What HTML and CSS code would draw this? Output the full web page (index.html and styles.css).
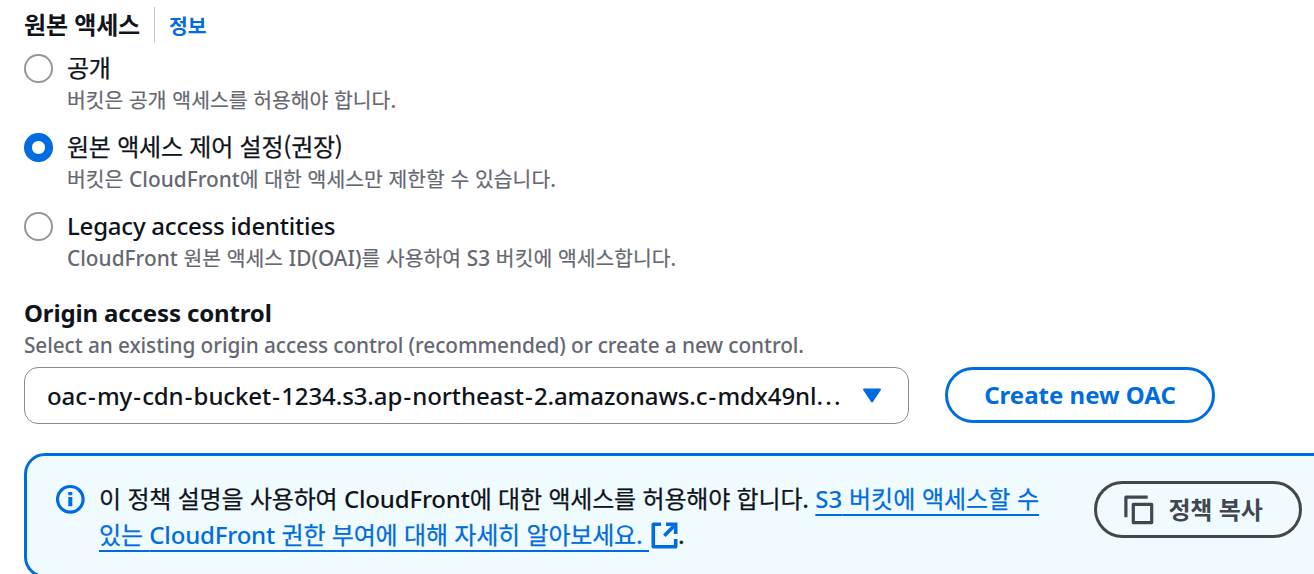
FILE: index.html
```html
<!DOCTYPE html>
<html lang="ko">
<head>
<meta charset="utf-8">
<title>원본 액세스</title>
<link rel="stylesheet" href="styles.css">
</head>
<body>
<main class="form">
  <header class="heading">
    <h2 class="heading-title">원본 액세스</h2>
    <a class="info-link">정보</a>
  </header>

  <div class="radio-group">
    <div class="option">
      <span class="radio"></span>
      <div class="option-body">
        <div class="option-label">공개</div>
        <div class="option-desc">버킷은 공개 액세스를 허용해야 합니다.</div>
      </div>
    </div>
    <div class="option">
      <span class="radio radio-checked"></span>
      <div class="option-body">
        <div class="option-label">원본 액세스 제어 설정(권장)</div>
        <div class="option-desc">버킷은 <span class="latin">CloudFront</span>에 대한 액세스만 제한할 수 있습니다.</div>
      </div>
    </div>
    <div class="option">
      <span class="radio"></span>
      <div class="option-body">
        <div class="option-label"><span class="latin latin-label">Legacy access identities</span></div>
        <div class="option-desc"><span class="latin">CloudFront</span> 원본 액세스 <span class="latin">ID(OAI)</span>를 사용하여 <span class="latin">S3</span> 버킷에 액세스합니다.</div>
      </div>
    </div>
  </div>

  <h3 class="field-title">Origin access control</h3>
  <p class="field-desc">Select an existing origin access control (recommended) or create a new control.</p>
  <div class="field-row">
    <div class="select">
      <span class="select-value">oac<span class="hyphen">-</span>my<span class="hyphen">-</span>cdn<span class="hyphen">-</span>bucket<span class="hyphen">-</span>1234.s3.ap<span class="hyphen">-</span>northeast<span class="hyphen">-</span>2.amazonaws.c<span class="hyphen">-</span>mdx49nl<span class="ellipsis">...</span></span>
      <svg class="caret" width="20" height="16" viewBox="0 0 20 16"><path d="M2 1.5h16L10 13.5z" fill="#006ce0" stroke="#006ce0" stroke-width="2" stroke-linejoin="round"/></svg>
    </div>
    <button class="button button-create">Create new OAC</button>
  </div>

  <section class="alert">
    <svg class="alert-icon" width="30" height="30" viewBox="0 0 30 30"><circle cx="14.3" cy="15.3" r="12.8" fill="none" stroke="#006ce0" stroke-width="3.2"/><path d="M12.3 8h4v3.2h-4zM12.3 13h4v9.2h-4z" fill="#006ce0"/></svg>
    <div class="alert-text">
      <div class="alert-line">이 정책 설명을 사용하여 <span class="latin latin-label">CloudFront</span>에 대한 액세스를 허용해야 합니다. <a class="link link-first"><span class="latin latin-label">S3</span> 버킷에 액세스할 수</a></div>
      <div class="alert-line"><a class="link">있는 <span class="latin latin-label">CloudFront</span> 권한 부여에 대해 자세히 알아보세요. </a><svg class="external" width="27" height="27" viewBox="0 0 27 27" fill="none" stroke="#006ce0" stroke-width="3.6"><path d="M10 2.3H2.3v22.4h22.4V17" stroke-linejoin="round"/><path d="M15 2.3h9.7V12M24.2 2.8L13.3 13.7"/></svg><span>.</span></div>
    </div>
    <button class="button button-copy"><svg class="copy" width="30" height="30" viewBox="0 0 30 30" fill="none" stroke="#424650" stroke-width="3.2"><path d="M1.9 22.3V2.1h21.8" stroke-linejoin="round"/><path d="M9.3 9.3h18.4v18.3H9.3z" stroke-linejoin="round"/></svg><span class="copy-label">정책 복사</span></button>
  </section>
</main>
</body>
</html>
```
FILE: styles.css
```css
* { box-sizing: border-box; }
body {
  margin: 0;
  background: #fff;
  color: #0f141a;
  font-family: "Noto Sans CJK KR", sans-serif;
  overflow: hidden;
}
h2, h3, p { margin: 0; }
.form {
  width: 1314px;
  height: 574px;
  padding: 7px 0 0 24px;
  overflow: hidden;
  white-space: nowrap;
}
.heading { display: flex; height: 36px; align-items: center; }
.heading-title {
  width: 131px;
  height: 36px;
  border-right: 1px solid #c6c6cd;
  font-size: 24px;
  line-height: 34px;
  font-weight: 700;
  letter-spacing: -0.2px;
}
.info-link {
  margin-left: 14px;
  color: #006ce0;
  font-size: 20.4px;
  line-height: 36px;
  font-weight: 700;
}
.radio-group { padding-top: 6px; }
.option { display: flex; height: 79px; gap: 14.5px; }
.radio {
  width: 28.5px;
  height: 28.5px;
  margin-top: 5px;
  border: 2px solid #96969e;
  border-radius: 50%;
}
.radio-checked { border: 8px solid #006ce0; }
.option-label { height: 36px; font-size: 24px; line-height: 36px; letter-spacing: -0.22px; -webkit-text-stroke: 0.25px; }
.option-desc { height: 28px; font-size: 20.4px; line-height: 28px; color: #656871; letter-spacing: 0.02px; -webkit-text-stroke: 0.2px; }
.latin { font-family: "Noto Sans", sans-serif; font-weight: 500; font-size: 20.8px; line-height: 1; -webkit-text-stroke: 0; }
.latin-label { font-size: 24px; }
.field-title {
  height: 34px;
  margin-top: 10px;
  font: 700 24px/34px "Noto Sans", sans-serif;
  letter-spacing: -0.14px;
}
.field-desc { height: 30px; font: 500 20.8px/30px "Noto Sans", sans-serif; color: #656871; letter-spacing: -0.09px; }
.field-row { display: flex; gap: 36px; margin-top: 7px; }
.select {
  display: flex;
  width: 885px;
  height: 57px;
  padding: 0 26px 0 22px;
  border: 1px solid #8c8c94;
  border-radius: 14px;
  align-items: center;
  justify-content: space-between;
  font: 500 24px/34px "Noto Sans", sans-serif;
  letter-spacing: -0.09px;
}
.hyphen { padding: 0 1.2px; }
.ellipsis { letter-spacing: 2.3px; }
.button {
  display: flex;
  align-items: center;
  justify-content: center;
  padding: 0;
  border: 3px solid #006ce0;
  border-radius: 29px;
  background: transparent;
}
.button-create {
  width: 270px;
  height: 56px;
  color: #006ce0;
  font: 700 24px/34px "Noto Sans", sans-serif;
}
.alert {
  display: flex;
  width: 1330px;
  height: 125px;
  margin-top: 29px;
  padding: 25px 0 0 29px;
  border: 3px solid #006ce0;
  border-radius: 21px;
  background: #f0fbff;
}
.alert-icon { margin-top: 3px; flex: none; }
.alert-text { width: 981px; margin: -1px 0 0 13px; flex: none; }
.alert-line { height: 36px; font-size: 24px; line-height: 36px; letter-spacing: -0.19px; -webkit-text-stroke: 0.25px; }
.link {
  color: #006ce0;
  text-decoration: underline 2px;
  text-underline-offset: 6px;
  text-decoration-skip-ink: none;
  white-space: pre;
}
.link-first { letter-spacing: 0; }
.external { margin-left: 2px; vertical-align: -5px; }
.button-copy {
  width: 208px;
  height: 57px;
  margin-left: 14px;
  padding-right: 9px;
  border-color: #424650;
  color: #424650;
  font: 700 24px/34px "Noto Sans CJK KR", sans-serif;
  letter-spacing: -0.2px;
  gap: 14px;
}
.copy-label { padding-bottom: 2px; }
```
